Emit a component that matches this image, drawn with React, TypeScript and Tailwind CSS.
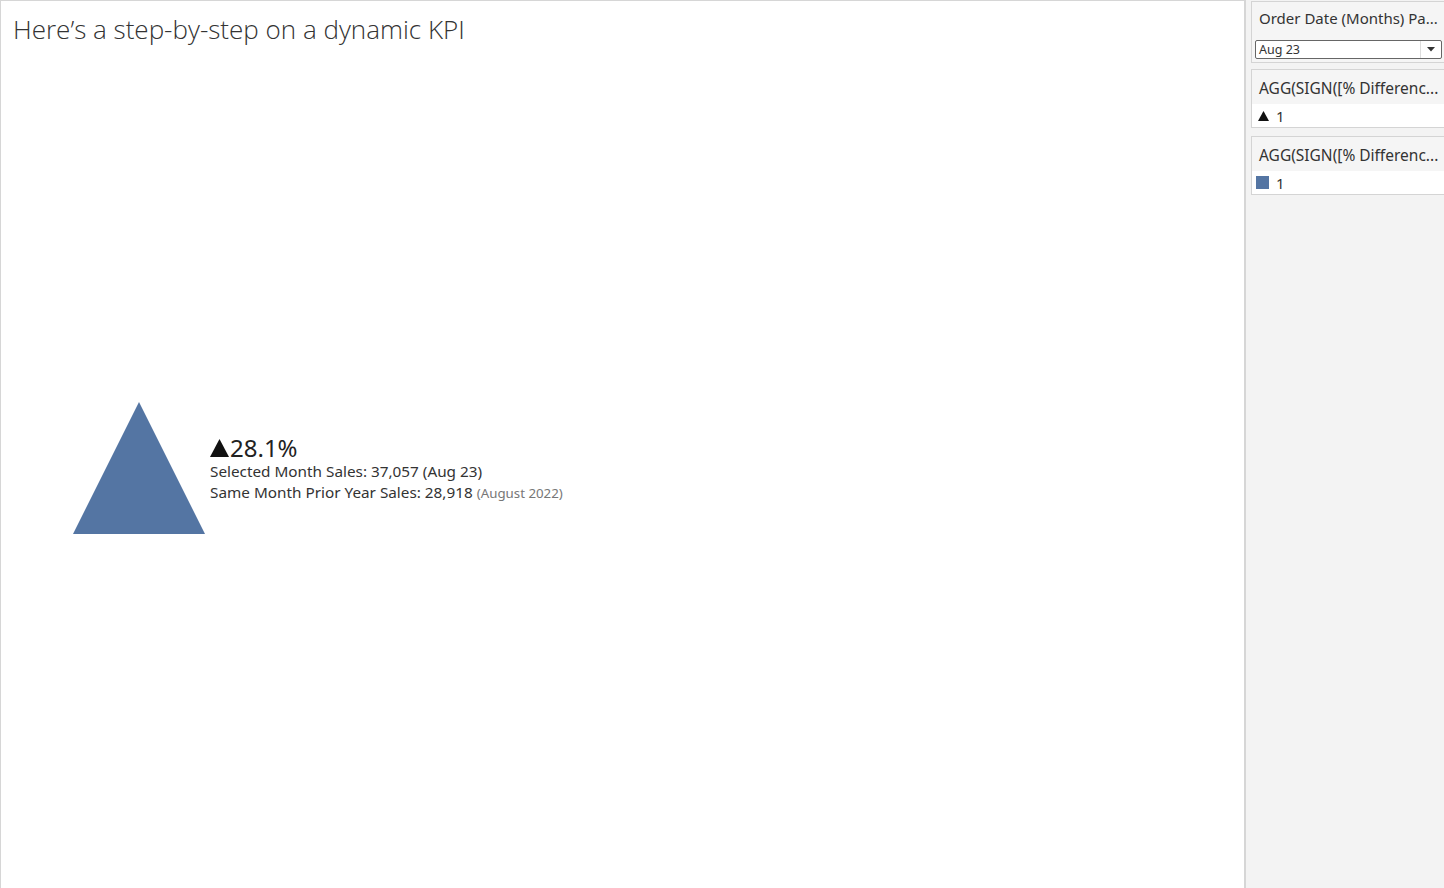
import React from "react"

const font = { fontFamily: "'Noto Sans', 'Open Sans', sans-serif" }

function FilterCard() {
  return (
    <div className="border border-[#d4d4d4] border-r-0 bg-[#f5f5f5] h-[62px]">
      <div className="h-[38px] pl-[7px] pt-[6px] text-[15px] leading-[20px] text-[#333] whitespace-nowrap overflow-hidden">
        Order Date (Months) Pa...
      </div>
      <div className="ml-[3px] mr-[2px] h-[19px] bg-white border border-[#666] rounded-[2px] flex items-center">
        <span className="flex-1 pl-[3px] text-[12.5px] leading-[17px] text-[#333]">Aug 23</span>
        <div className="w-[21px] h-full border-l border-[#ddd] flex items-center justify-center">
          <svg width="8" height="5" viewBox="0 0 8 5">
            <path d="M0 0 L8 0 L4 4.5 Z" fill="#333" />
          </svg>
        </div>
      </div>
    </div>
  )
}

function LegendCard({ children }: { children: React.ReactNode }) {
  return (
    <div className="border border-[#d4d4d4] border-r-0 bg-[#f5f5f5]">
      <div className="h-[34px] pl-[7px] pt-[8px] text-[15.5px] leading-[20px] text-[#333] whitespace-nowrap overflow-hidden">
        AGG(SIGN([% Differenc...
      </div>
      <div className="h-[23px] bg-white flex items-center pl-[4px] gap-[7px] text-[15px] text-[#333]">
        {children}
        <span className="leading-[20px]">1</span>
      </div>
    </div>
  )
}

export default function App() {
  return (
    <div className="flex h-[888px] w-[1444px] overflow-hidden bg-white" style={font}>
      <div className="w-[1246px] h-full border-l border-t border-r-2 border-[#d6d6d6] bg-white flex flex-col">
        <div
          className="pl-[12px] pt-[11px] text-[26px] leading-[34px] font-light text-[#333]"
          style={{ fontFamily: "'Open Sans', 'Noto Sans', sans-serif" }}
        >
          Here’s a step-by-step on a dynamic KPI
        </div>
        <div className="flex items-center mt-[355px] pl-[71px]">
          <svg width="134" height="134" viewBox="0 0 134 134" className="shrink-0">
            <path d="M67 1 L133 133 L1 133 Z" fill="#5475a3" />
          </svg>
          <div className="ml-[4px] mt-[2px] text-[#333]">
            <div className="text-[24px] leading-[26px] text-[#222] flex items-center">
              <svg width="19" height="18" viewBox="0 0 19 18" className="mr-[1px]">
                <path d="M9.5 0 L19 18 L0 18 Z" fill="#111" />
              </svg>
              28.1%
            </div>
            <div className="text-[15.3px] leading-[21px]">Selected Month Sales: 37,057 (Aug 23)</div>
            <div className="text-[15.3px] leading-[21px]">
              Same Month Prior Year Sales: 28,918{" "}
              <span className="text-[13.3px] text-[#777]">(August 2022)</span>
            </div>
          </div>
        </div>
      </div>
      <div className="flex-1 h-full bg-[#f3f3f3] pl-[5px] pt-[1px] flex flex-col gap-[6px]">
        <FilterCard />
        <LegendCard>
          <svg width="11" height="10" viewBox="0 0 11 10" className="ml-[2px]">
            <path d="M5.5 0 L11 10 L0 10 Z" fill="#111" />
          </svg>
        </LegendCard>
        <div className="mt-[2px]">
          <LegendCard>
            <div className="w-[13px] h-[13px] bg-[#5475a3]" />
          </LegendCard>
        </div>
      </div>
    </div>
  )
}
